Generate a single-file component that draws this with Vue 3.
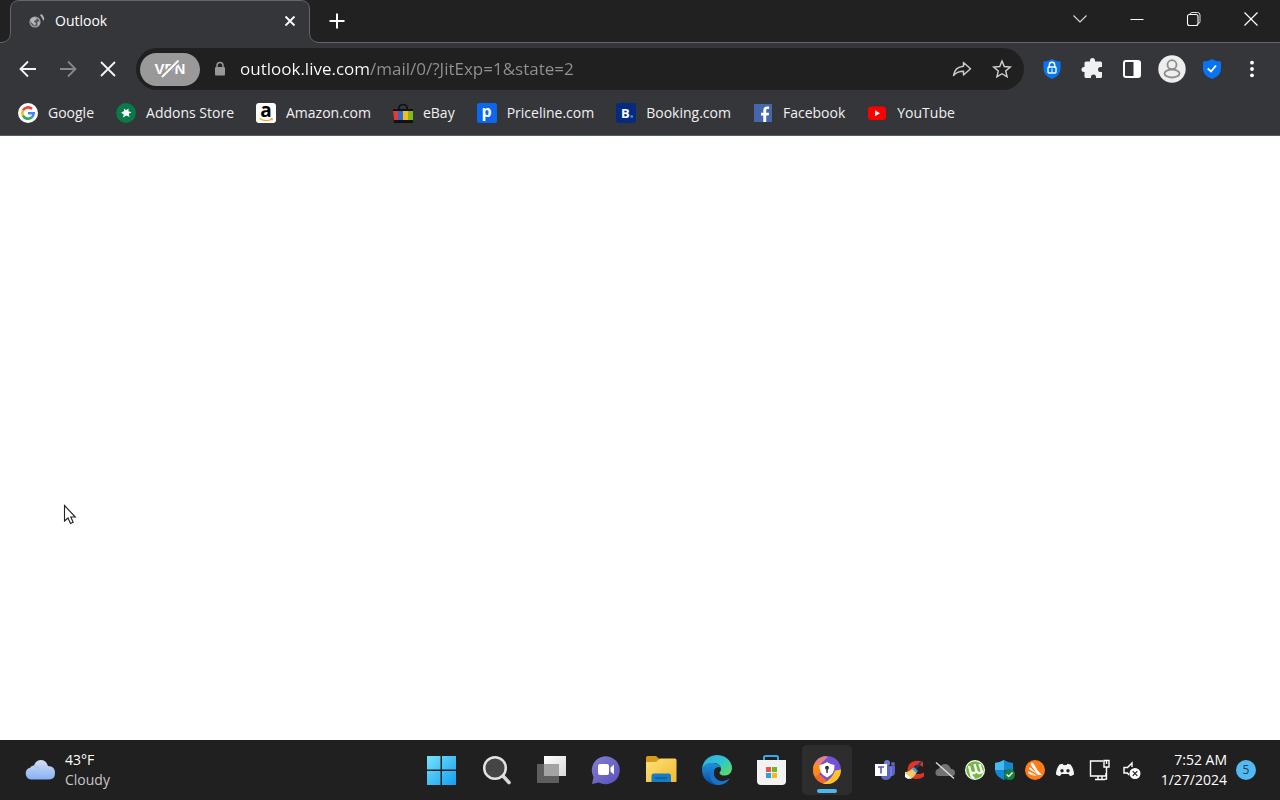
<script setup>
import { ref } from 'vue'

const address = ref('outlook.live.com/mail/0/?JitExp=1&state=2')

const bookmarks = [
  { id: 'google', label: 'Google', href: '#google' },
  { id: 'addons', label: 'Addons Store', href: '#addons' },
  { id: 'amazon', label: 'Amazon.com', href: '#amazon' },
  { id: 'ebay', label: 'eBay', href: '#ebay' },
  { id: 'priceline', label: 'Priceline.com', href: '#priceline' },
  { id: 'booking', label: 'Booking.com', href: '#booking' },
  { id: 'facebook', label: 'Facebook', href: '#facebook' },
  { id: 'youtube', label: 'YouTube', href: '#youtube' }
]
</script>

<template>
  <div class="desktop">
    <header class="browser">
      <div class="titlebar">
        <div class="tab">
          <svg class="tab-shape" width="320" height="43" viewBox="0 0 320 43" aria-hidden="true">
            <path d="M0 42.5C7 42.5 10.5 39 10.5 32V10C10.5 3.500 13.500.5 20 .5H300C306.500.5 309.500 3.500 309.500 10V32C309.500 39 313 42.500 320 42.500V43H0Z" fill="#35363a" />
            <path d="M0 42.5C7 42.5 10.5 39 10.5 32V10C10.5 3.500 13.500.5 20 .5H300C306.500.5 309.500 3.500 309.500 10V32C309.500 39 313 42.500 320 42.500" fill="none" stroke="#66676a" />
          </svg>
          <svg class="favicon" width="18" height="18" viewBox="0 0 18 18" aria-hidden="true">
            <circle cx="7" cy="10" r="5" fill="#56585c" stroke="#a4a6a9" stroke-width="1.200" />
            <path d="M3 7l3-2 3 1-1 2-2 1v1l2 1-1 3-2-2-2-2z M9.500 10l2-1v3l-2 2z" fill="#b6b8ba" />
            <path d="M12 3q1.500-1.500 2.500 0 2 2.500 1.500 5-.5 1-1 0-1-2.500-3-5z" fill="#b6b8ba" />
          </svg>
          <span class="tab-title">Outlook</span>
          <button class="tab-close" aria-label="Close tab">
            <svg width="12" height="12" viewBox="0 0 12 12"><path d="M1.500 1.500l9 9M10.500 1.500l-9 9" stroke="#fff" stroke-width="1.800" /></svg>
          </button>
        </div>
        <button class="new-tab" aria-label="New tab">
          <svg width="16" height="16" viewBox="0 0 16 16"><path d="M8 .5v15M.5 8h15" stroke="#fff" stroke-width="2" /></svg>
        </button>
        <div class="window-controls">
          <button aria-label="Search tabs"><svg width="16" height="16" viewBox="0 0 16 16"><path d="M1.500 4.500L8 11l6.500-6.500" fill="none" stroke="#ddd" stroke-width="1.100" /></svg></button>
          <button aria-label="Minimize"><svg width="16" height="16" viewBox="0 0 16 16"><path d="M1.500 8.500h13" stroke="#fff" /></svg></button>
          <button aria-label="Restore"><svg width="16" height="16" viewBox="0 0 16 16"><rect x="1.500" y="3.500" width="10.500" height="11" rx="2" fill="none" stroke="#fff" stroke-width="1.100" /><path d="M4 3.500Q4 1.500 6 1.500h5.500q2.500 0 2.500 2.500V10.500q0 2-2 2" fill="none" stroke="#ddd" /></svg></button>
          <button aria-label="Close"><svg width="16" height="16" viewBox="0 0 16 16"><path d="M1.500 1.500l13 13M14.500 1.500l-13 13" stroke="#fff" stroke-width="1.200" /></svg></button>
        </div>
      </div>

      <div class="toolbar">
        <button class="tool" aria-label="Back"><svg width="20" height="20" viewBox="0 0 20 20"><path d="M18 10H3M10 2.500L2.500 10l7.500 7.500" fill="none" stroke="#f4f4f4" stroke-width="1.800" /></svg></button>
        <button class="tool" aria-label="Forward"><svg width="20" height="20" viewBox="0 0 20 20"><path d="M2 10h15M10 2.500l7.500 7.500-7.500 7.500" fill="none" stroke="#87888a" stroke-width="1.800" /></svg></button>
        <button class="tool" aria-label="Stop"><svg width="20" height="20" viewBox="0 0 20 20"><path d="M3 3l14 14M17 3L3 17" stroke="#f4f4f4" stroke-width="1.800" /></svg></button>

        <div class="omnibox">
          <button class="vpn" aria-label="VPN off">
            <span>VPN</span>
            <svg class="vpn-slash" width="24" height="22" viewBox="0 0 24 22"><path d="M3.500 19.500L20.500 2.500" stroke="#999" stroke-width="5" /><path d="M4 19L20.500 2.500" stroke="#fff" stroke-width="2" /></svg>
          </button>
          <svg class="lock" width="12" height="16" viewBox="0 0 12 16" aria-hidden="true"><rect x="1" y="6" width="10" height="8.500" rx="1" fill="#989898" /><path d="M3 6.500V4.500a3 3 0 0 1 6 0v2" fill="none" stroke="#989898" stroke-width="1.500" /></svg>
          <input v-model="address" class="address" type="text" aria-label="Address" spellcheck="false" />
          <button class="tool" aria-label="Share"><svg width="20" height="20" viewBox="0 0 20 20"><path d="M11.500 3.500v3.800C5.500 7.800 2.300 11 1.500 16.500c2.300-3 5.500-4.300 10-4.300V16l7-6.300z" fill="none" stroke="#c9c9c9" stroke-width="1.500" stroke-linejoin="round" /></svg></button>
          <button class="tool" aria-label="Bookmark this page"><svg width="20" height="20" viewBox="0 0 20 20"><path d="M10 2l2.300 5.500 6 .5-4.600 3.900 1.400 5.900L10 14.700l-5.100 3.100 1.400-5.900L1.700 8l6-.5z" fill="none" stroke="#d2d2d2" stroke-width="1.400" /></svg></button>
        </div>

        <button class="tool" aria-label="Privacy guard"><svg width="20" height="22" viewBox="0 0 20 22"><path d="M10 1q4 2.500 8.500 2.500V11q0 6.500-8.500 10-8.500-3.500-8.500-10V3.500Q6 3.500 10 1z" fill="#0874ee" /><path d="M7.300 9.500V7a2.700 2.700 0 0 1 5.400 0v2.500" fill="none" stroke="#fff" stroke-width="1.400" /><rect x="6" y="9" width="8" height="6" rx="1" fill="none" stroke="#fff" stroke-width="1.400" /><path d="M10 10.500v3.500" stroke="#fff" /></svg></button>
        <button class="tool" aria-label="Extensions"><svg width="24" height="24" viewBox="0 0 24 24"><path d="M3 7q0-1.500 1.500-1.500H8.500V4.500a2.500 2.500 0 0 1 5 0V5.500H19q1.500 0 1.500 1.500v4H19a2.500 2.500 0 0 0 0 5h1.500v4.500q0 1.500-1.500 1.500h-4.500v-1a2.500 2.500 0 0 0-5 0v1h-5Q3 22 3 20.500V16H2.500a2.500 2.500 0 0 1 0-5H3z" fill="#f0f1f3" transform="translate(1.500 -1)" /></svg></button>
        <button class="tool" aria-label="Side panel"><svg width="20" height="20" viewBox="0 0 20 20"><rect x="2" y="2" width="16" height="16" rx="2" fill="none" stroke="#fff" stroke-width="2" /><path d="M11.500 2h6v16h-6z" fill="#fff" /></svg></button>
        <button class="tool" aria-label="Profile"><svg width="28" height="28" viewBox="0 0 28 28"><circle cx="14" cy="14" r="13.700" fill="#eee" /><circle cx="14" cy="9.700" r="4.500" fill="none" stroke="#8d8d8f" stroke-width="1.800" /><ellipse cx="14" cy="18.500" rx="7.500" ry="4" fill="none" stroke="#8d8d8f" stroke-width="1.800" /></svg></button>
        <button class="tool" aria-label="Security"><svg width="20" height="22" viewBox="0 0 20 22"><path d="M10 1q4 2.500 9 2.500V11q0 6.500-9 10-9-3.500-9-10V3.500Q6 3.500 10 1z" fill="#0874f4" /><path d="M5.700 10.500l3.300 3 5-6" fill="none" stroke="#fff" stroke-width="1.800" /></svg></button>
        <button class="tool" aria-label="Menu"><svg width="20" height="20" viewBox="0 0 20 20"><circle cx="10" cy="3.700" r="1.900" fill="#fff" /><circle cx="10" cy="10" r="1.900" fill="#fff" /><circle cx="10" cy="16.300" r="1.900" fill="#fff" /></svg></button>
      </div>

      <nav class="bookmarks" aria-label="Bookmarks">
        <a v-for="b in bookmarks" :key="b.id" :href="b.href" class="bookmark">
          <svg width="20" height="20" viewBox="0 0 20 20" aria-hidden="true">
            <g v-if="b.id === 'google'" fill="none" stroke-width="2.600">
              <circle cx="10" cy="10" r="10" fill="#fff" />
              <path d="M14 6A5.700 5.700 0 0 0 4.900 7.500" stroke="#ea4335" />
              <path d="M4.900 7.500a5.700 5.700 0 0 0 0 5" stroke="#fbbc05" />
              <path d="M4.900 12.500a5.700 5.700 0 0 0 8.900 1.800" stroke="#34a853" />
              <path d="M13.800 14.300a5.700 5.700 0 0 0 1.900-4H10" stroke="#4285f4" />
            </g>
            <g v-else-if="b.id === 'addons'">
              <circle cx="10" cy="10" r="9.900" fill="#087b49" />
              <path d="M8.200 5.500l1.800 1.700 2.700-1.700-.3 2.700 3 1-2.600 1.600.7 3.200-3-1.500-3.500 2 .7-3.300-2.700-1.400 2.800-1.500z" fill="#fff" />
            </g>
            <g v-else-if="b.id === 'amazon'">
              <rect width="20" height="20" rx="3" fill="#fff" />
              <text x="10" y="14" text-anchor="middle" class="logo-letter amazon-letter">a</text>
              <path d="M3.500 15.500q6.500 4 12.500.5" fill="none" stroke="#f5a52b" stroke-width="1.400" /><path d="M14.500 15.500h2l-.5 2" fill="none" stroke="#f5a52b" />
            </g>
            <g v-else-if="b.id === 'ebay'">
              <path d="M6 7V4q1-2.500 4-2.500T14 4v3" fill="none" stroke="#101018" stroke-width="1.700" />
              <path d="M0 6h20v14H1z" fill="#111" />
              <path d="M0 8h5v9H1z" fill="#e33a38" /><path d="M5 8h5v9H5z" fill="#286bd0" /><path d="M10 8h5v9h-5z" fill="#f4bd18" /><path d="M15 8h5v9h-5z" fill="#83b91c" />
            </g>
            <g v-else-if="b.id === 'priceline'">
              <rect width="20" height="20" rx="2.500" fill="#0b68ed" /><text x="9.500" y="14" text-anchor="middle" fill="#fff" class="logo-letter priceline-letter">p</text>
            </g>
            <g v-else-if="b.id === 'booking'">
              <rect width="20" height="20" rx="3" fill="#062a80" /><text x="5" y="14.500" fill="#fff" class="logo-letter booking-letter">B</text><circle cx="15.800" cy="13.500" r="1.300" fill="#2da5ec" />
            </g>
            <g v-else-if="b.id === 'facebook'">
              <rect x="1" y="1" width="18" height="18" fill="#4667ac" /><path d="M10.300 19v-6.500H8V9.700h2.300V7.500c0-2.500 1.500-4 3.800-4h2v2.600h-1.400c-1.200 0-1.500.5-1.500 1.500v2.100h2.900l-.4 2.800h-2.500V19z" fill="#fff" />
            </g>
            <g v-else>
              <rect x="1" y="3.500" width="18" height="13.500" rx="3.500" fill="#f00" /><path d="M8 7.200l5 3-5 3z" fill="#fff" />
            </g>
          </svg>
          <span>{{ b.label }}</span>
        </a>
      </nav>
    </header>

    <main class="page">
      <svg class="pointer" width="14" height="22" viewBox="0 0 14 22" aria-hidden="true"><path d="M1.500 1.500v15.500l3.500-3 2.500 5.500 2.700-1.300L7.800 13h4.500z" fill="#fff" stroke="#222" stroke-width="1.100" /></svg>
    </main>

    <footer class="taskbar">
      <button class="weather">
        <svg width="32" height="22" viewBox="0 0 32 22" aria-hidden="true">
          <defs><linearGradient id="cloud" x1="0" y1="0" x2="0" y2="1"><stop offset="0" stop-color="#d4def4" /><stop offset="1" stop-color="#86b0f4" /></linearGradient></defs>
          <path d="M7 20.500a6 6 0 0 1-1-11.700Q7.500 6.500 10 6.500 12 1 17 1t7 6q7 0 7 7 0 6.500-6 6.500z" fill="url(#cloud)" /><path d="M9 7q5-.5 7 3.500" stroke="#9fb4e6" fill="none" opacity=".5" />
        </svg>
        <span class="weather-text"><span>43°F</span><span class="muted">Cloudy</span></span>
      </button>

      <nav class="apps" aria-label="Apps">
        <button aria-label="Start"><svg width="32" height="32" viewBox="0 0 32 32">
          <defs><linearGradient id="win" x1="0" y1="0" x2="1" y2="1"><stop offset="0" stop-color="#75e2fb" /><stop offset="1" stop-color="#139ef0" /></linearGradient></defs>
          <path d="M1 2H14.500V15.500H1zM16 2H30V15.500H16zM1 17H14.500V31H1zM16 17H30V31H16z" fill="url(#win)" /></svg></button>
        <button aria-label="Search"><svg width="32" height="32" viewBox="0 0 32 32"><path d="M22 22l6 6.500" stroke="#d7d7d7" stroke-width="3.600" stroke-linecap="round" /><circle cx="14" cy="14" r="10.800" fill="#454545" stroke="#e2e2e2" stroke-width="2.500" /></svg></button>
        <button aria-label="Task view"><svg width="32" height="32" viewBox="0 0 32 32"><defs><linearGradient id="view" x1="0" y1="0" x2="1" y2="1"><stop offset="0" stop-color="#fff" /><stop offset="1" stop-color="#d8d8d8" /></linearGradient></defs><path d="M8 2h22v20H8z" fill="url(#view)" /><path d="M1 10h22v19H1z" fill="#6a6a6a" opacity=".85" /><path d="M8 10h15v12H8z" fill="#a3a3a3" /></svg></button>
        <button aria-label="Chat"><svg width="32" height="32" viewBox="0 0 32 32"><defs><linearGradient id="chat" x1="0" y1="0" x2="1" y2="1"><stop offset="0" stop-color="#837fd2" /><stop offset="1" stop-color="#5850bb" /></linearGradient></defs><path d="M1 30l1.500-7A14 14 0 1 1 8 28.500z" fill="url(#chat)" /><rect x="7" y="10" width="11" height="11" rx="2" fill="#fff" /><path d="M19.500 13.500l3.500-3v10l-3.500-3z" fill="#fff" /></svg></button>
        <button aria-label="File Explorer"><svg width="32" height="32" viewBox="0 0 32 32"><defs><linearGradient id="folder" x1="0" y1="0" x2="1" y2="1"><stop offset="0" stop-color="#ffe17b" /><stop offset="1" stop-color="#f2b92e" /></linearGradient></defs><path d="M0 6V3.500Q0 2 1.500 2H10l4 3.500L10 9H0z" fill="#d59a18" /><path d="M0 8h10l4-3.500h15q1.500 0 1.500 1.500v22H0z" fill="url(#folder)" /><path d="M5.500 28v-6q0-2.500 2.500-2.500h14.500q2.500 0 2.500 2.500v6z" fill="#167cc4" /><path d="M9 24h12" stroke="#0d5c9b" stroke-width="1.500" /></svg></button>
        <button aria-label="Edge"><svg width="32" height="32" viewBox="0 0 32 32"><defs><linearGradient id="edge-top" x1="0" y1="0" x2="1" y2="1"><stop offset="0" stop-color="#30a9e9" /><stop offset=".5" stop-color="#30c6cb" /><stop offset="1" stop-color="#67dd54" /></linearGradient><linearGradient id="edge-low" x1="0" y1="0" x2="0" y2="1"><stop offset="0" stop-color="#1d92e0" /><stop offset="1" stop-color="#0d4999" /></linearGradient></defs>
          <path d="M1 15.500C1.500 7 8 1 16 1c9 0 15 6.500 15 13 0 4.500-3 7.500-7 7.500-3.500 0-5.500-1.300-5.500-2.600 0-1 1.500-1.400 1.500-4C20 11 16 9 12 9 6 9 2 12 1 15.500z" fill="url(#edge-top)" />
          <path d="M1 15.500C2 11.500 6 9 11 9c5 0 8.500 2.200 9 5-2-2-6-.5-7 3-1.500 6 3.500 11 9.500 10 3-.5 4.500-1.500 6-2.500C26 29 21.500 31 16.500 31 8 31 .5 24 1 15.500z" fill="url(#edge-low)" />
          <path d="M13 17c-1.500 6 3.500 11 9.500 10 3-.5 4.500-1.500 6-2.500C26 29 21.500 31 16.500 31 10 29.500 6 21 13 17z" fill="#1674cc" /></svg></button>
        <button aria-label="Microsoft Store"><svg width="32" height="32" viewBox="0 0 32 32"><path d="M8 7V3.500Q8 2 9.500 2h11Q22 2 22 3.500V7" fill="none" stroke="#39a8e4" stroke-width="2" /><path d="M1 6h29v21q0 4-4 4H5q-4 0-4-4z" fill="#f3f3f4" /><path d="M10 13h5v5h-5z" fill="#ed563b" /><path d="M16 13h5v5h-5z" fill="#6fb42c" /><path d="M10 19h5v5h-5z" fill="#2b9ee5" /><path d="M16 19h5v5h-5z" fill="#f4b91b" /></svg></button>
        <button class="active" aria-label="Secure Browser"><svg width="32" height="32" viewBox="0 0 32 32"><circle cx="16" cy="16" r="14" fill="#7551d3" /><path d="M3 10.500A14 14 0 0 0 17 30l-3-5-6-5z" fill="#f36b27" /><path d="M3 10.500q-2 6 1 12l6-4-1-8 5-5Q6 5 3 10.500z" fill="#ff8c16" /><path d="M12 29.400A14 14 0 0 0 29.500 19.500l.5-4-6 1q-3 9-12 12.900z" fill="#ffc326" /><path d="M3 10.500A14 14 0 0 1 14 2l3 1-8 7z" fill="#e48188" /><path d="M16 8q3.500 2.500 7.500 3 .5 9-7.500 12.500-8-3.500-7.500-12.500 4-.5 7.500-3z" fill="#fff" /><circle cx="16" cy="13.800" r="2" fill="#333" /><path d="M15.300 15h1.500v4h-1.500z" fill="#333" /></svg></button>
      </nav>

      <div class="tray">
        <button aria-label="Teams"><svg width="22" height="22" viewBox="0 0 22 22"><circle cx="13" cy="4" r="3" fill="#7078d6" /><circle cx="19" cy="5" r="2" fill="#5b63be" /><path d="M8 7h13v6q0 4-3.500 4Q16 21 12 21q-5 0-5-5z" fill="#5c65c5" /><path d="M17 8v9" stroke="#8b91e2" /><rect x="1" y="5" width="12" height="12" fill="#fff" /><path d="M4 8h6M7 8v6.500" stroke="#535ab5" stroke-width="1.600" /></svg></button>
        <button aria-label="CCleaner"><svg width="22" height="22" viewBox="0 0 22 22"><path d="M19 8V3Q15 1 11 2 4 3 3.500 11q0 8 7.500 9 5 .5 9-2.500v-4q-4 2-7 1.500-4-.5-4-4.500 1-5 5.500-4.500Q17 6 19 8z" fill="#dc3527" /><path d="M17 3L10 12" stroke="#233f63" stroke-width="2" /><path d="M9 9l4 4q-2 4-6 7L1 18v-5q4 0 8-4z" fill="#f0cf6b" /><path d="M1 14l6 5-3 1-3-2z" fill="#fff" /><path d="M10 8l4 4-2 2-4-4z" fill="#499bd2" /></svg></button>
        <button aria-label="OneDrive not signed in"><svg width="22" height="22" viewBox="0 0 22 22"><path d="M4 17q-3-1-2.500-4T5 9.500Q7 5 11 5t6 5q4 0 4 4 0 3-3 3z" fill="#737373" /><path d="M2 3.500L20 19.500" stroke="#ddd" stroke-width="1.400" /></svg></button>
        <button aria-label="uTorrent"><svg width="22" height="22" viewBox="0 0 22 22"><circle cx="11" cy="11" r="10" fill="#f6fff0" /><circle cx="11" cy="11" r="8.800" fill="#74b943" /><path d="M5 7l2.500 10 2.500 2.500M6.500 13q4.500 2.500 6-1L10.500 5M12.500 12q2 3.500 5.500 1L15.500 5" fill="none" stroke="#fff" stroke-width="2.300" /></svg></button>
        <button aria-label="Windows Security"><svg width="22" height="22" viewBox="0 0 22 22"><path d="M10 1q4 2.500 9 3v7q0 6-9 10Q1 17 1 11V4q5-.5 9-3z" fill="#1686d1" /><path d="M10 1v10H1V4q5-.5 9-3z" fill="#45baf0" /><path d="M10 11h9q0 6-9 10z" fill="#0c4e96" /><circle cx="15.500" cy="15.500" r="5.500" fill="#128339" /><path d="M12.700 15.500l2 2 3.800-4" fill="none" stroke="#fff" stroke-width="1.400" /></svg></button>
        <button aria-label="Avast"><svg width="22" height="22" viewBox="0 0 22 22"><circle cx="11" cy="11" r="10" fill="#ff7d19" /><path d="M7 4q1.500-.8 2.500.5l4.500 7.500L18 16h-4L7.500 7q-1.500-2-.5-3z" fill="#fff" /><path d="M4 13q1-1 2 0l7 3.500h-3q-5-1-6-3.500zM5 8.500q1-.5 2 .5l6.500 6.500L5 10z" fill="#fff" /></svg></button>
        <button aria-label="Discord"><svg width="22" height="22" viewBox="0 0 22 22"><path d="M5.500 5.500l3-.7 1 1.200h3l1-1.200 3 .7q3.500 4.500 3.500 10Q17.500 17 16 17l-1.500-2h-7L6 17q-1.500 0-4-1.500 0-5.500 3.500-10z" fill="#f4f4f4" /><circle cx="8" cy="11.700" r="1.700" fill="#252525" /><circle cx="14" cy="11.700" r="1.700" fill="#252525" /></svg></button>
        <button class="wide" aria-label="Network"><svg width="22" height="22" viewBox="0 0 22 22"><path d="M14 2H1.500v15H17v-3M6 20.500h10M9 17v3M13 17v3" fill="none" stroke="#fff" stroke-width="1.400" /><path d="M15 1.500h5V8h-5zM17.500 8v12H16M17.500 2v3" fill="none" stroke="#fff" stroke-width="1.400" /></svg></button>
        <button aria-label="Volume muted"><svg width="22" height="22" viewBox="0 0 22 22"><path d="M11 8V4L6.500 8.500H3v5.500h3.500l1.500 2" fill="none" stroke="#fff" stroke-width="1.400" /><circle cx="14" cy="14.500" r="5.500" fill="#fff" /><path d="M11.700 12.200l4.600 4.600M16.300 12.200l-4.600 4.600" stroke="#222" stroke-width="1.200" /></svg></button>
        <button class="clock"><span>7:52 AM</span><span>1/27/2024</span></button>
        <button class="badge" aria-label="5 notifications">5</button>
      </div>
    </footer>
  </div>
</template>

<style>
body {
  margin: 0;
  background: #fff;
}
</style>

<style scoped>
.desktop {
  display: flex;
  flex-direction: column;
  min-height: 100vh;
  font-family: "Open Sans", "Noto Sans", sans-serif;
  font-size: 14px;
  line-height: 20px;
  color: #fff;
}
button {
  display: flex;
  align-items: center;
  justify-content: center;
  padding: 0;
  border: 0;
  background: none;
  color: inherit;
  font: inherit;
}
svg {
  display: block;
  flex: none;
  overflow: visible;
}
.browser {
  background: #35363a;
  border-bottom: 1px solid #5b5c60;
}
.titlebar {
  display: flex;
  height: 43px;
  background: #212121;
  box-shadow: inset 0 -1px #66676a;
}
.tab {
  position: relative;
  display: flex;
  align-items: center;
  box-sizing: border-box;
  width: 320px;
  padding: 0 24px 2px 28px;
}
.tab-shape {
  position: absolute;
  inset: 0;
}
.favicon,
.tab-title,
.tab-close {
  position: relative;
}
.tab-title {
  flex: 1;
  margin-left: 9px;
}
.new-tab {
  width: 34px;
  padding-bottom: 2px;
}
.window-controls {
  display: flex;
  margin-left: auto;
  padding: 0 1px 6px 0;
}
.window-controls button {
  width: 57px;
}
.toolbar {
  display: flex;
  align-items: center;
  height: 52px;
  padding: 0 8px;
}
.tool {
  width: 40px;
  height: 40px;
  flex: none;
}
.omnibox {
  display: flex;
  align-items: center;
  flex: 1;
  min-width: 0;
  height: 42px;
  box-sizing: border-box;
  margin: 0 8px;
  padding: 0 2px 0 4px;
  border-radius: 21px;
  background: #202020;
}
.vpn {
  position: relative;
  width: 60px;
  height: 33px;
  border-radius: 17px;
  background: #999;
  font-family: "Liberation Sans", sans-serif;
  font-size: 15px;
  font-weight: 700;
}
.vpn-slash {
  position: absolute;
  left: 18px;
  top: 5px;
}
.lock {
  margin: 0 14px;
}
.address {
  flex: 1;
  min-width: 0;
  padding: 0;
  border: 0;
  outline: 0;
  font: inherit;
  font-size: 17px;
  line-height: 24px;
  color: transparent;
  background: linear-gradient(90deg, #fff 130px, #929292 130px);
  background-clip: text;
  -webkit-background-clip: text;
}
.bookmarks {
  display: flex;
  gap: 22px;
  height: 40px;
  padding: 0 18px;
  box-sizing: border-box;
}
.bookmark {
  display: flex;
  align-items: center;
  gap: 10px;
  height: 36px;
  color: #f1f1f1;
  text-decoration: none;
  white-space: nowrap;
}
.logo-letter {
  font-family: "Open Sans", sans-serif;
  font-weight: 700;
}
.amazon-letter {
  font-size: 19px;
}
.priceline-letter {
  font-size: 16px;
}
.booking-letter {
  font-size: 13px;
}
.page {
  position: relative;
  flex: 1;
  background: #fff;
}
.pointer {
  position: absolute;
  left: 63px;
  top: 368px;
}
.taskbar {
  display: grid;
  grid-template-columns: 1fr auto 1fr;
  align-items: center;
  height: 60px;
  padding-right: 12px;
  background: #202020;
}
.weather {
  justify-self: start;
  gap: 9px;
  padding-left: 24px;
}
.weather-text,
.clock {
  display: flex;
  flex-direction: column;
}
.weather-text {
  align-items: flex-start;
}
.muted {
  color: #c6c6c6;
}
.apps {
  display: flex;
  gap: 5px;
}
.apps button {
  position: relative;
  width: 50px;
  height: 50px;
  border-radius: 5px;
}
.apps .active {
  background: #2d2d2d;
}
.active::after {
  content: "";
  position: absolute;
  bottom: 2px;
  left: 15px;
  width: 20px;
  height: 4px;
  border-radius: 2px;
  background: #4cb8ee;
}
.tray {
  display: flex;
  align-items: center;
  justify-self: end;
}
.tray button {
  width: 30px;
}
.tray .wide {
  width: 34px;
  margin-left: 3px;
}
.tray .clock {
  width: 80px;
  align-items: flex-end;
}
.tray .badge {
  width: 20px;
  height: 20px;
  margin-left: 9px;
  margin-right: 12px;
  border-radius: 50%;
  background: #52baf2;
  color: #16384a;
  font-size: 12px;
}
</style>
